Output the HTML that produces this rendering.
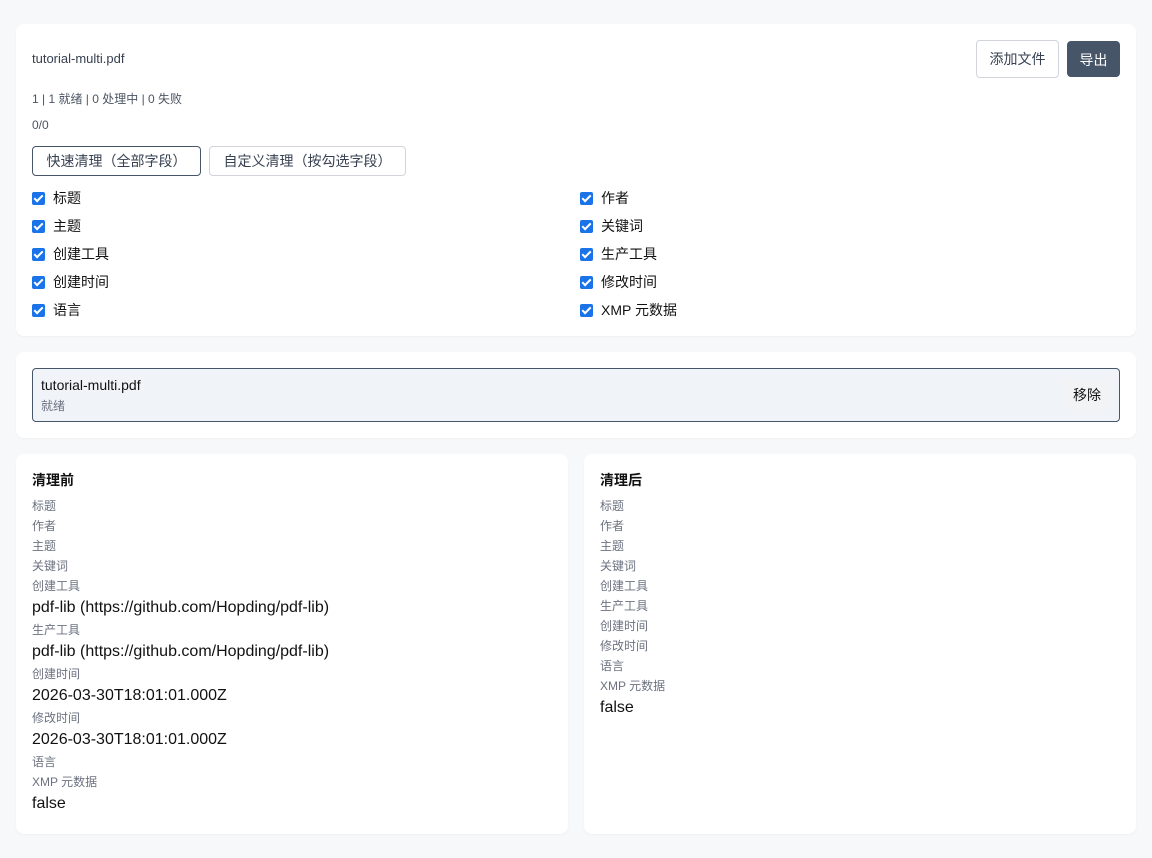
<!DOCTYPE html>
<html><head><meta charset="utf-8"><style>
*{box-sizing:border-box;margin:0;padding:0}
body{width:1152px;height:858px;background:#f7f8fa;font-family:"Liberation Sans","Noto Sans CJK SC",sans-serif;color:#1f2937;position:relative;overflow:hidden}
.card{position:absolute;background:#fff;border-radius:8px;box-shadow:0 1px 2px rgba(0,0,0,0.04)}
.a{position:absolute;white-space:nowrap}
.btn{position:absolute;border:1px solid #d1d5db;border-radius:4px;background:#fff;font-size:14px;text-align:center;color:#374151;white-space:nowrap}
.cb{position:absolute;font-size:14px;color:#111;height:20px;line-height:20px;white-space:nowrap;width:300px}
.cb i{position:absolute;left:0;top:4px;width:13px;height:13px;background:#1a73e8;border-radius:2px}
.cb i:after{content:"";position:absolute;left:4px;top:1px;width:3px;height:7px;border:solid #fff;border-width:0 2px 2px 0;transform:rotate(45deg)}
.cb span{position:absolute;left:21px;top:0;white-space:nowrap}
.l{font-size:12px;color:#6b7280;height:20px;line-height:20px}
.v{font-size:16px;color:#111;height:24px;line-height:24px}
</style></head><body>
<div class="card" style="left:16px;top:24px;width:1120px;height:312px"></div>
<div class="a" style="left:32px;top:51px;font-size:13px;color:#374151">tutorial-multi.pdf</div>
<div class="btn" style="left:976px;top:40px;width:83px;height:38px;line-height:36px">添加文件</div>
<div class="btn" style="left:1067px;top:41px;width:53px;height:36px;line-height:36px;background:#475569;border-color:#475569;color:#fff">导出</div>
<div class="a" style="left:32px;top:90px;font-size:12px;color:#4b5563">1 | 1 就绪 | 0 处理中 | 0 失败</div>
<div class="a" style="left:32px;top:118px;font-size:12px;color:#4b5563">0/0</div>
<div class="btn" style="left:32px;top:146px;width:169px;height:30px;line-height:28px;border-color:#475569">快速清理（全部字段）</div>
<div class="btn" style="left:209px;top:146px;width:197px;height:30px;line-height:28px">自定义清理（按勾选字段）</div>
<div class="cb" style="left:32px;top:188px"><i></i><span>标题</span></div>
<div class="cb" style="left:32px;top:216px"><i></i><span>主题</span></div>
<div class="cb" style="left:32px;top:244px"><i></i><span>创建工具</span></div>
<div class="cb" style="left:32px;top:272px"><i></i><span>创建时间</span></div>
<div class="cb" style="left:32px;top:300px"><i></i><span>语言</span></div>
<div class="cb" style="left:580px;top:188px"><i></i><span>作者</span></div>
<div class="cb" style="left:580px;top:216px"><i></i><span>关键词</span></div>
<div class="cb" style="left:580px;top:244px"><i></i><span>生产工具</span></div>
<div class="cb" style="left:580px;top:272px"><i></i><span>修改时间</span></div>
<div class="cb" style="left:580px;top:300px"><i></i><span>XMP 元数据</span></div>

<div class="card" style="left:16px;top:352px;width:1120px;height:86px"></div>
<div class="a" style="left:32px;top:368px;width:1088px;height:54px;background:#f0f3f8;border:1px solid #475569;border-radius:4px"></div>
<div class="a" style="left:41px;top:377px;font-size:14px;color:#111">tutorial-multi.pdf</div>
<div class="a" style="left:41px;top:397px;font-size:12px;color:#6b7280">就绪</div>
<div class="a" style="left:1064px;top:380px;width:46px;height:30px;line-height:30px;text-align:center;background:#f1f3f5;border-radius:4px;font-size:14px;color:#111">移除</div>

<div class="card" style="left:16px;top:454px;width:552px;height:380px;padding:16px">
<div style="font-size:14px;font-weight:bold;color:#111;height:20px;line-height:20px;margin-bottom:6px">清理前</div>
<div class="l">标题</div><div class="l">作者</div><div class="l">主题</div><div class="l">关键词</div>
<div class="l">创建工具</div><div class="v">pdf-lib (https://github.com/Hopding/pdf-lib)</div>
<div class="l">生产工具</div><div class="v">pdf-lib (https://github.com/Hopding/pdf-lib)</div>
<div class="l">创建时间</div><div class="v">2026-03-30T18:01:01.000Z</div>
<div class="l">修改时间</div><div class="v">2026-03-30T18:01:01.000Z</div>
<div class="l">语言</div><div class="l">XMP 元数据</div><div class="v">false</div>
</div>
<div class="card" style="left:584px;top:454px;width:552px;height:380px;padding:16px">
<div style="font-size:14px;font-weight:bold;color:#111;height:20px;line-height:20px;margin-bottom:6px">清理后</div>
<div class="l">标题</div><div class="l">作者</div><div class="l">主题</div><div class="l">关键词</div>
<div class="l">创建工具</div><div class="l">生产工具</div><div class="l">创建时间</div><div class="l">修改时间</div>
<div class="l">语言</div><div class="l">XMP 元数据</div><div class="v">false</div>
</div>
</body></html>
